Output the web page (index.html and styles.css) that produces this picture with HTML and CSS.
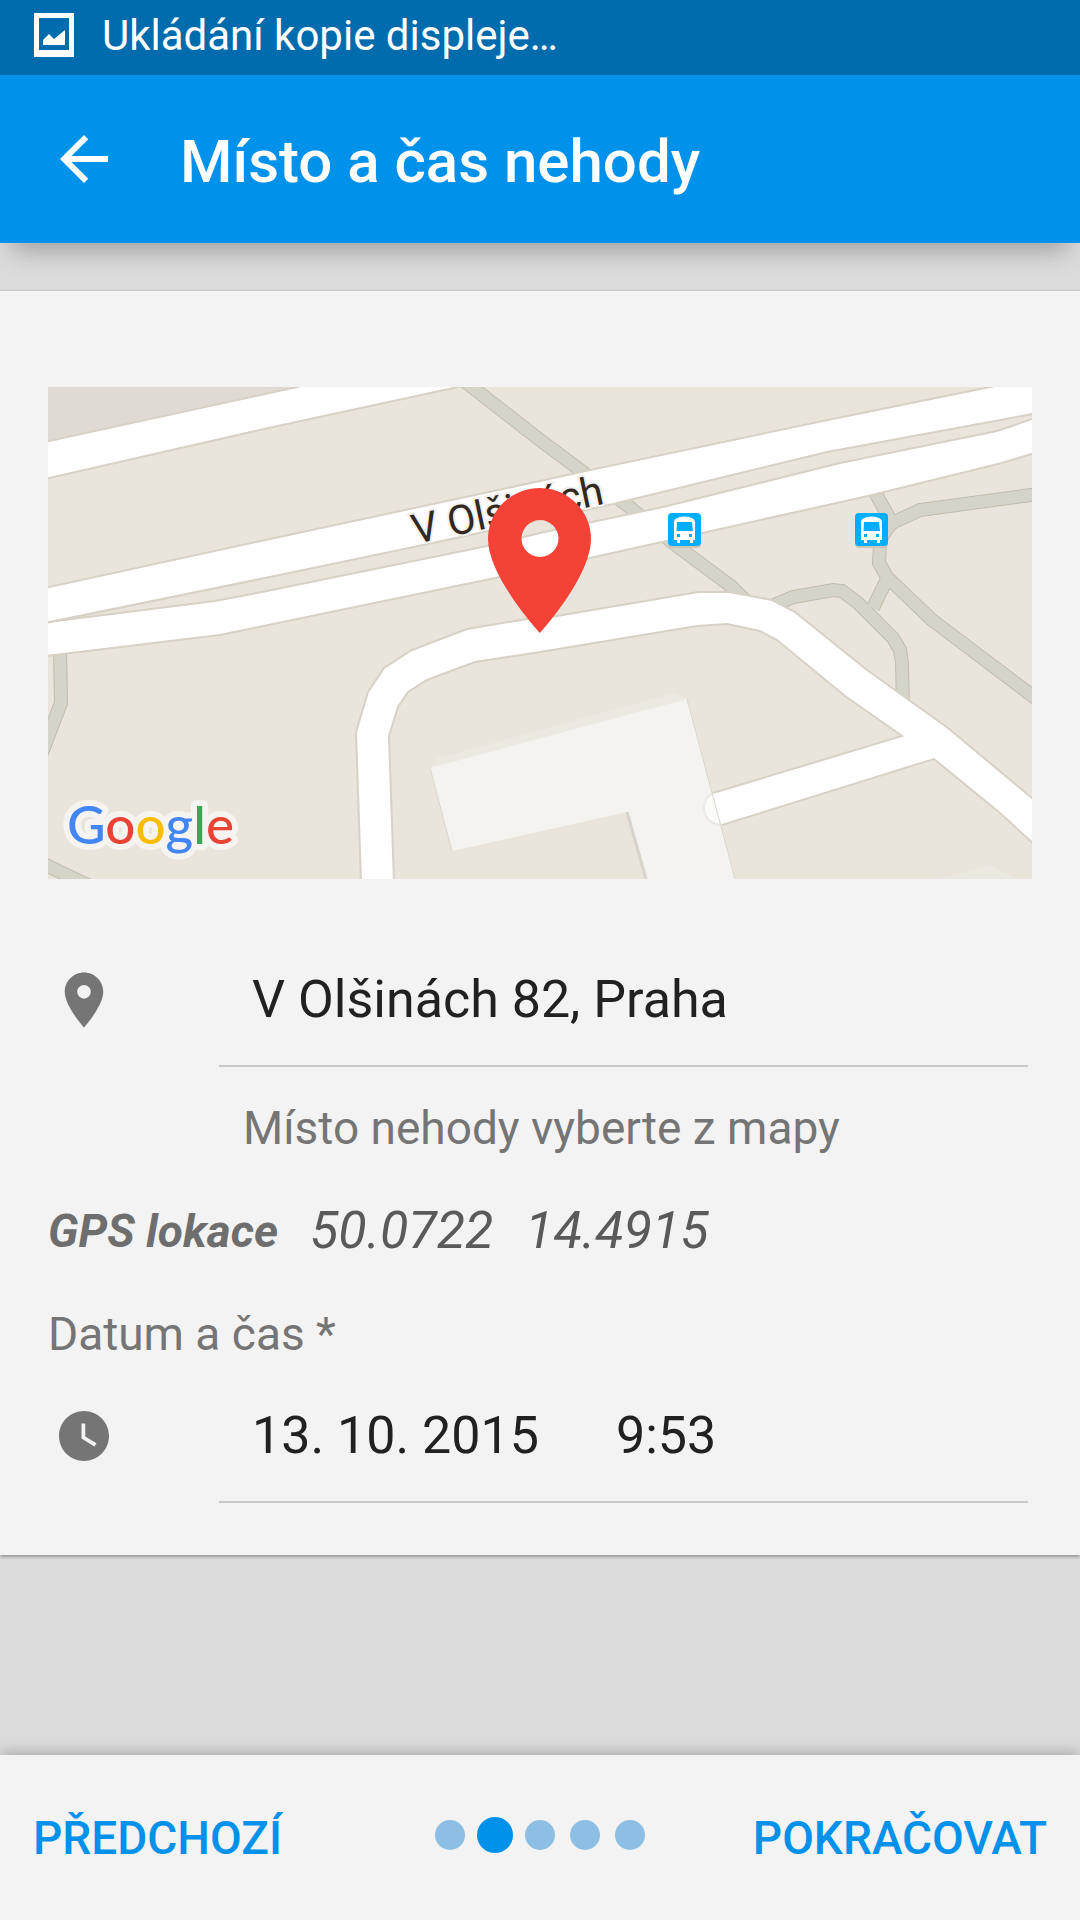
FILE: index.html
```html
<!DOCTYPE html>
<html lang="cs">
<head>
    <meta charset="UTF-8">
    <meta name="viewport" content="width=device-width, initial-scale=1.0">
    <title>Místo a čas nehody</title>
    <link rel="stylesheet" href="styles.css">
</head>
<body>
    <div class="status-bar">
        <svg class="status-icon" viewBox="0 0 40 44" aria-hidden="true">
            <path fill="#fff" fill-rule="evenodd" d="M0 0h40v44H0zM5 5v32h30V5z"/>
            <path fill="#fff" d="M9 32v-5l6-6 5 5 11-9v15z"/>
        </svg>
        <span>Ukládání kopie displeje…</span>
    </div>

    <header class="toolbar">
        <button class="back" type="button" aria-label="Zpět">
            <svg viewBox="0 0 24 24"><path fill="#fff" d="M20 11H7.83l5.59-5.59L12 4l-8 8 8 8 1.41-1.41L7.83 13H20v-2z"/></svg>
        </button>
        <h1>Místo a čas nehody</h1>
    </header>

    <main>
        <form class="card" id="accident">
            <svg class="map" viewBox="0 0 984 492" role="img" aria-label="Mapa místa nehody">
                <defs>
                    <symbol id="bus" viewBox="0 0 33 35">
                        <rect y="2" width="33" height="33" rx="4" fill="#cbc5bb"/>
                        <rect width="33" height="33" rx="4" fill="#00aeff"/>
                        <path fill="#fff" d="M6 27V9q0-5 10.500-5.500Q27 4 27 9v18h-2v3h-3v-3H12v3H9v-3z"/>
                        <path fill="#00aeff" d="M9 9h15l1 9H8.500zM9 21h3v3H9zM21 21h3v3h-3z"/>
                    </symbol>
                    <g id="paths">
                        <path d="M398-20 424 0 492 53 579 118 625 156 684 200 700 216"/>
                        <path d="M12 262 13 316 0 350-6 366"/>
                        <path d="M-20 468 0 479 50 503"/>
                        <path d="M824 100 844 136 872 123 990 107"/>
                        <path d="M846 134Q833 147 832 157L831 176 839 190 884 233 990 313"/>
                        <path d="M724 219 745 210 785 203 794 204 810 216 845 251 852 263 854 276 855 320"/>
                        <path d="M839 192 825 221"/>
                    </g>
                </defs>

                <rect width="984" height="492" fill="#e9e5dd"/>
                <path fill="#dfdad4" d="M0 0h249L0 54z"/>

                <!-- footpaths: casing, then fill -->
                <use href="#paths" fill="none" stroke="#c0bdae" stroke-width="14"/>
                <use href="#paths" fill="none" stroke="#d4d4c8" stroke-width="12"/>

                <!-- roads -->
                <g fill="#fff" stroke="#d7d1c6" stroke-width="2">
                    <path d="M-3 55 249 0 260-3H424L410 0 225 40-3 92z"/>
                    <path d="M-3 236 0 235 167 214 209 206 439 159 492 146 615 120 792 76 949 44 990 30V65L954 76 820 109 542 171 452 190 225 237 172 248-3 269z"/>
                    <path d="M-3 201 222 152 492 94 542 83 775 34 942 0 956-3H990V26L779 65 565 117 380 157 222 190-3 236z"/>
                    <path d="M313 495 308 345 320 305 336 281 364 263 419 242 479 232 509 229 650 205 681 205 724 213 747 225 819 283 900 341 990 416V461L952 426 886 372 674 438A17 17 0 0 1 665 406L854 349 797 309 729 253 712 244 679 237 649 239 492 265 427 275 379 293 360 305 350 320 341 349 346 495z"/>
                </g>

                <!-- buildings -->
                <path fill="#ece9e2" d="M382 381 390 371 626 306 639 312 492 356zM892 492l50-14 27 14z"/>
                <path fill="#f4f3ef" d="M382 381 639 312 687 492H599L579 425 404 464z"/>
                <path fill="#fbfbf9" stroke="#ebe9e4" stroke-width="2" d="M674 438A17 17 0 0 1 665 406"/>
                <path fill="none" stroke="#d8d6ce" d="M382 381 404 464M639 312 687 492"/>
                <path fill="none" stroke="#d6d4cc" stroke-width="3" d="M579 425 598 492"/>

                <text class="street" transform="translate(367 157) rotate(-12)">V Olšinách</text>

                <use href="#bus" x="620" y="126" width="33" height="35"/>
                <use href="#bus" x="807" y="126" width="33" height="35"/>

                <path fill="#f44336" fill-rule="evenodd" d="M492 101C463 101 440 124 440 152C440 190 492 246 492 246S543 190 543 152C543 124 520 101 492 101zM492 133a18.500 18.500 0 1 1 0 37a18.500 18.500 0 1 1 0-37z"/>

                <use class="halo" href="#google"/>
                <text class="google" id="google" x="19" y="457"><tspan class="blue">G</tspan><tspan class="red">o</tspan><tspan class="yellow">o</tspan><tspan class="blue">g</tspan><tspan class="green">l</tspan><tspan class="red">e</tspan></text>
            </svg>

            <div class="row row-place">
                <svg class="icon" viewBox="0 0 24 24" aria-hidden="true"><path fill="#757575" d="M12 2C8.130 2 5 5.130 5 9c0 5.250 7 13 7 13s7-7.750 7-13c0-3.870-3.130-7-7-7zm0 9.500a2.500 2.500 0 1 1 0-5 2.500 2.500 0 0 1 0 5z"/></svg>
                <div class="field">
                    <input class="place" type="text" value="V Olšinách 82, Praha" aria-label="Místo nehody" aria-describedby="hint">
                </div>
            </div>
            <p class="hint" id="hint">Místo nehody vyberte z mapy</p>

            <p class="gps"><b>GPS lokace</b> <span>50.0722</span> <span>14.4915</span></p>

            <label class="caption" for="date">Datum a čas *</label>
            <div class="row">
                <svg class="icon icon-clock" viewBox="0 0 24 24" aria-hidden="true"><path fill="#757575" d="M12 2C6.500 2 2 6.500 2 12s4.500 10 10 10 10-4.500 10-10S17.500 2 12 2zm4.200 14.200L11 13V7h1.500v5.200l4.500 2.700-.8 1.300z"/></svg>
                <div class="field">
                    <input class="date" id="date" type="text" value="13. 10. 2015">
                    <input class="time" type="text" value="9:53" aria-label="Čas">
                </div>
            </div>
        </form>
    </main>

    <footer class="steps">
        <button class="prev" type="button">PŘEDCHOZÍ</button>
        <ol class="dots" aria-label="Krok 2 z 5">
            <li></li>
            <li class="active"></li>
            <li></li>
            <li></li>
            <li></li>
        </ol>
        <button class="next" type="submit" form="accident">POKRAČOVAT</button>
    </footer>
</body>
</html>
```

FILE: styles.css
```css
* {
    box-sizing: border-box;
}
body {
    margin: 0;
    min-height: 100vh;
    display: flex;
    flex-direction: column;
    font-family: Roboto, sans-serif;
    background: #dcdcdc;
    color: #212121;
}
button, input {
    font-family: inherit;
    border: none;
    background: none;
    padding: 0;
    margin: 0;
}
button {
    cursor: pointer;
}
svg {
    display: block;
}

.status-bar {
    height: 75px;
    padding: 0 34px 5px;
    display: flex;
    align-items: center;
    gap: 28px;
    background: #006cae;
    color: #fff;
    font-size: 42px;
}
.status-icon {
    width: 40px;
    height: 44px;
}

.toolbar {
    height: 168px;
    padding: 0 48px;
    display: flex;
    align-items: center;
    gap: 60px;
    background: #0091ea;
    color: #fff;
    box-shadow: 0 20px 24px -12px rgba(0, 0, 0, 0.28);
}
.back svg {
    width: 72px;
}
.toolbar h1 {
    margin: 0;
    padding-top: 4px;
    font-size: 60px;
    font-weight: 500;
}

main {
    flex: 1;
    padding-top: 47px;
}
.card {
    padding: 96px 48px 52px;
    background: #f3f3f3;
    border-top: 1px solid #c8c8c8;
    box-shadow: 0 2px 3px rgba(0, 0, 0, 0.3);
}
.map {
    width: 100%;
}
.street {
    font-size: 41px;
    fill: #32281e;
    stroke: #f3f1ed;
    stroke-width: 4px;
    paint-order: stroke;
}
.google {
    font-family: Lato, sans-serif;
    font-size: 53px;
    font-weight: 500;
}
.halo {
    stroke: #f6f4f0;
    stroke-width: 12px;
    stroke-linejoin: round;
}
.blue {
    fill: #4285f4;
}
.red {
    fill: #ea4335;
}
.yellow {
    fill: #fbbc05;
}
.green {
    fill: #34a853;
}

.row {
    display: flex;
    align-items: center;
    margin-right: 4px;
}
.row-place {
    margin-top: 54px;
}
.icon {
    width: 66px;
    margin: 0 102px 0 3px;
    flex: none;
}
.icon-clock {
    width: 60px;
    margin: 0 105px 0 6px;
}
.field {
    flex: 1;
    min-width: 0;
    display: flex;
    padding-left: 33px;
    border-bottom: 2px solid #c8c8c8;
}
.field input {
    height: 132px;
    min-width: 0;
    font-size: 52px;
    color: #212121;
}
.place {
    flex: 1;
}
.date {
    width: 364px;
}
.time {
    flex: 1;
}
.hint {
    margin: 33px 0 0 192px;
    padding-left: 3px;
}
.hint, .caption {
    font-size: 46px;
    line-height: 56px;
    color: #757575;
}
.gps {
    display: flex;
    align-items: center;
    gap: 32px;
    margin: 43px 0;
    font-size: 52px;
    line-height: 64px;
    font-style: italic;
    color: #5a5a5a;
}
.gps b {
    font-size: 46px;
    color: #6e6e6e;
}
.caption {
    display: block;
    margin-bottom: 7px;
}

.steps {
    height: 165px;
    padding: 0 33px;
    display: grid;
    grid-template-columns: 1fr auto 1fr;
    align-items: center;
    background: #f3f3f3;
    box-shadow: 0 -2px 14px rgba(0, 0, 0, 0.25);
}
.steps button {
    font-size: 46px;
    font-weight: 500;
    color: #0091ea;
}
.prev {
    justify-self: start;
}
.next {
    justify-self: end;
}
.dots {
    display: flex;
    align-items: center;
    gap: 15px;
    margin: 0;
    padding: 0 0 6px;
    list-style: none;
}
.dots li {
    width: 30px;
    height: 30px;
    border-radius: 50%;
    background: #8cbfe3;
}
.dots .active {
    width: 36px;
    height: 36px;
    margin: 0 -3px;
    background: #0091ea;
}
```
